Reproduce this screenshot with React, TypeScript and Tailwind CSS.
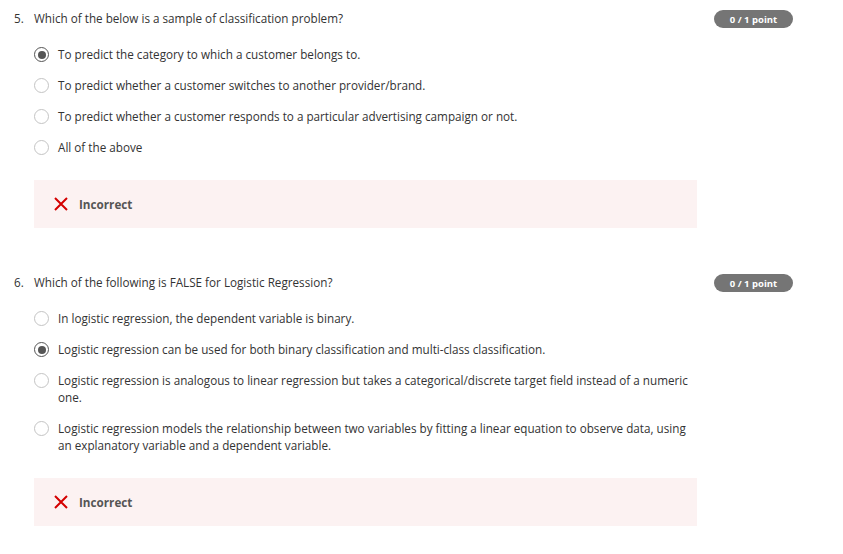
import React from "react";

type Question = {
  num: string;
  text: string;
  options: string[];
  selected: number;
};

const questions: Question[] = [
  {
    num: "5.",
    text: "Which of the below is a sample of classification problem?",
    options: [
      "To predict the category to which a customer belongs to.",
      "To predict whether a customer switches to another provider/brand.",
      "To predict whether a customer responds to a particular advertising campaign or not.",
      "All of the above",
    ],
    selected: 0,
  },
  {
    num: "6.",
    text: "Which of the following is FALSE for Logistic Regression?",
    options: [
      "In logistic regression, the dependent variable is binary.",
      "Logistic regression can be used for both binary classification and multi-class classification.",
      "Logistic regression is analogous to linear regression but takes a categorical/discrete target field instead of a numeric one.",
      "Logistic regression models the relationship between two variables by fitting a linear equation to observe data, using an explanatory variable and a dependent variable.",
    ],
    selected: 1,
  },
];

function Radio({ checked }: { checked: boolean }) {
  return (
    <span
      className={
        checked
          ? "mt-px flex h-[15px] w-[15px] shrink-0 items-center justify-center rounded-full border-[1.5px] border-[#555]"
          : "mt-px flex h-[15px] w-[15px] shrink-0 items-center justify-center rounded-full border-[1.5px] border-[#c4c4c4]"
      }
    >
      {checked && <span className="h-[8px] w-[8px] rounded-full bg-[#555]" />}
    </span>
  );
}

function QuestionBlock({ q }: { q: Question }) {
  return (
    <section>
      {/* Title row */}
      <div className="flex items-start pr-[50px]">
        <span className="w-[20px] shrink-0">{q.num}</span>
        <p className="flex-1">{q.text}</p>
        <span className="flex h-[18px] w-[79px] items-center justify-center rounded-full bg-[#757575] text-[9.5px] font-bold text-white">
          0 / 1 point
        </span>
      </div>

      {/* Options */}
      <div className="mt-[18px] ml-[20px] flex w-[660px] flex-col gap-[14px]">
        {q.options.map((opt, i) => (
          <label key={i} className="flex items-start gap-[9px]">
            <Radio checked={i === q.selected} />
            <span>{opt}</span>
          </label>
        ))}
      </div>

      {/* Feedback */}
      <div className="mt-[24px] ml-[20px] flex h-[48px] w-[663px] items-center gap-[11px] bg-[#fcf2f2] pl-[20px]">
        <svg width="14" height="14" viewBox="0 0 14 14">
          <path d="M1 1 L13 13 M13 1 L1 13" stroke="#d40000" strokeWidth="2" />
        </svg>
        <span className="font-bold text-[#555]">Incorrect</span>
      </div>
    </section>
  );
}

export default function App() {
  return (
    <main
      className="min-h-screen bg-white pl-[14px] pt-[10px] text-[11.7px] leading-[17px] text-[#333]"
      style={{ fontFamily: '"Open Sans", sans-serif' }}
    >
      <div className="flex flex-col gap-[46px]">
        {questions.map((q) => (
          <QuestionBlock key={q.num} q={q} />
        ))}
      </div>
    </main>
  );
}
